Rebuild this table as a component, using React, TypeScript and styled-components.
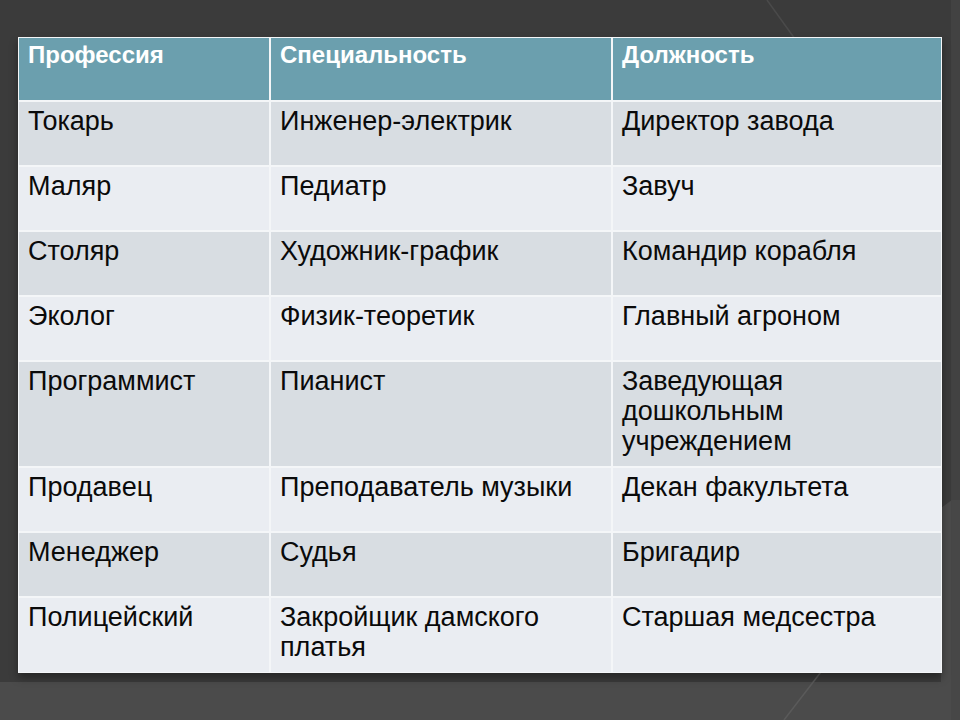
import styled, { createGlobalStyle } from "styled-components";

const GlobalStyle = createGlobalStyle`
  html, body {
    margin: 0;
    padding: 0;
  }
  body {
    background: #3b3b3b;
    font-family: "Liberation Sans", Arial, sans-serif;
  }
`

const headers = ["Профессия", "Специальность", "Должность"]

const rows: string[][] = [
    ["Токарь", "Инженер-электрик", "Директор завода"],
    ["Маляр", "Педиатр", "Завуч"],
    ["Столяр", "Художник-график", "Командир корабля"],
    ["Эколог", "Физик-теоретик", "Главный агроном"],
    ["Программист", "Пианист", "Заведующая дошкольным учреждением"],
    ["Продавец", "Преподаватель музыки", "Декан факультета"],
    ["Менеджер", "Судья", "Бригадир"],
    ["Полицейский", "Закройщик дамского платья", "Старшая медсестра"],
]

function Backdrop () {
    return (
        <BackdropSvg viewBox="0 0 960 720" width={960} height={720}>
            <polygon points="0,682 941,682 941,508 960,494 960,720 0,720" fill="#4b4b4b" />
            <rect x={951} y={0} width={9} height={500} fill="#424242" />
            <rect x={951} y={500} width={9} height={220} fill="#474747" />
            <line x1={767} y1={0} x2={800} y2={46} stroke="#4a4a4a" strokeWidth={1.5} />
            <line x1={784} y1={720} x2={824} y2={668} stroke="#5a5a5a" strokeWidth={1.5} />
        </BackdropSvg>
    )
}

export default function App () {
    return (
        <Page>
            <GlobalStyle />
            <Backdrop />
            <Table>
                {headers.map(h => <HeadCell key={h}>{h}</HeadCell>)}
                {rows.map((row, i) =>
                    row.map((cell, j) => (
                        <Cell key={`${i}-${j}`} shade={i % 2 === 0 ? "dark" : "light"}>
                            {cell}
                        </Cell>
                    ))
                )}
            </Table>
        </Page>
    )
}

const Page = styled.div`
    position: relative;
    width: 960px;
    height: 720px;
    overflow: hidden;
    box-sizing: border-box;
    padding: 37px 0 0 18px;
`

const BackdropSvg = styled.svg`
    position: absolute;
    inset: 0;
    z-index: 0;
`

const Table = styled.div`
    position: relative;
    z-index: 1;
    width: 924px;
    box-sizing: border-box;
    display: grid;
    grid-template-columns: 250px 340px 328px;
    gap: 2px;
    border: 1px solid #f4f6f8;
    background: #f4f6f8;
    box-shadow: 0 5px 8px rgba(0, 0, 0, 0.35);
`

const HeadCell = styled.div`
    background: #6b9fae;
    color: #ffffff;
    font-weight: 700;
    font-size: 24px;
    line-height: 26px;
    min-height: 62px;
    box-sizing: border-box;
    padding: 4px 10px 8px 9px;
`

const Cell = styled.div<{ shade: "dark" | "light" }>`
    background: ${p => p.shade === "dark" ? "#d8dde2" : "#eaedf2"};
    color: #0a0a0a;
    font-size: 27px;
    line-height: 30px;
    min-height: 63px;
    box-sizing: border-box;
    padding: 4px 10px 10px 9px;
`
